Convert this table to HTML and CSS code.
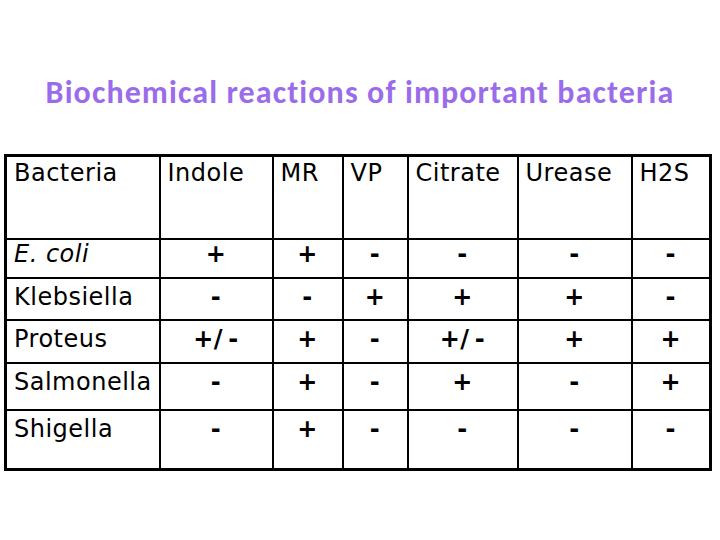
FILE: index.html
```html
<!DOCTYPE html>
<html>
<head>
<meta charset="utf-8">
<link rel="stylesheet" href="styles.css">
</head>
<body>
<div class="slide">
  <h1 class="title">Biochemical reactions of important bacteria</h1>
  <table class="grid">
    <colgroup>
      <col class="c1"><col class="c2"><col class="c3"><col class="c4"><col class="c5"><col class="c6"><col class="c7">
    </colgroup>
    <tr class="head">
      <th>Bacteria</th><th>Indole</th><th>MR</th><th>VP</th><th>Citrate</th><th>Urease</th><th>H2S</th>
    </tr>
    <tr class="r1">
      <td class="name"><i>E. coli</i></td><td>+</td><td>+</td><td>-</td><td>-</td><td>-</td><td>-</td>
    </tr>
    <tr class="r2">
      <td class="name">Klebsiella</td><td>-</td><td>-</td><td>+</td><td>+</td><td>+</td><td>-</td>
    </tr>
    <tr class="r3">
      <td class="name">Proteus</td><td>+/&thinsp;-</td><td>+</td><td>-</td><td>+/&thinsp;-</td><td>+</td><td>+</td>
    </tr>
    <tr class="r4">
      <td class="name">Salmonella</td><td>-</td><td>+</td><td>-</td><td>+</td><td>-</td><td>+</td>
    </tr>
    <tr class="r5">
      <td class="name">Shigella</td><td>-</td><td>+</td><td>-</td><td>-</td><td>-</td><td>-</td>
    </tr>
  </table>
</div>
</body>
</html>
```

FILE: styles.css
```css
html, body {
  margin: 0;
  padding: 0;
  background: #ffffff;
}
.slide {
  width: 720px;
  height: 540px;
  padding-top: 71px;
  box-sizing: border-box;
}
.title {
  margin: 0;
  height: 83px;
  text-align: center;
  font-family: Carlito, "Lato", "Open Sans", sans-serif;
  font-weight: 700;
  font-size: 32px;
  line-height: 44px;
  color: #9a6cec;
  letter-spacing: 1.1px;
}
.grid {
  margin-left: 4px;
  border-collapse: collapse;
  table-layout: fixed;
  width: 708px;
  border: 3px solid #000;
  font-family: "Comic Sans MS", "DejaVu Sans", sans-serif;
  font-size: 24px;
  letter-spacing: 0.5px;
  color: #000;
}
.c1 { width: 154px; }
.c2 { width: 113px; }
.c3 { width: 70px; }
.c4 { width: 65px; }
.c5 { width: 110px; }
.c6 { width: 114px; }
.c7 { width: 79px; }
.grid th, .grid td {
  border: 2px solid #000;
  padding: 5px 0 0 0;
  vertical-align: top;
  line-height: 26px;
  text-align: center;
  font-weight: 700;
}
.grid th {
  text-align: left;
  font-weight: 400;
  padding-left: 7px;
  padding-top: 3px;
}
.grid td.name {
  text-align: left;
  font-weight: 400;
  padding-left: 7px;
}
.head { height: 83px; }
.r1 { height: 39px; }
.r2 { height: 42px; }
.r3 { height: 43px; }
.r4 { height: 47px; }
.r5 { height: 60px; }
.r1 td { padding-top: 1px; }
.r5 td { padding-top: 5px; }
```
